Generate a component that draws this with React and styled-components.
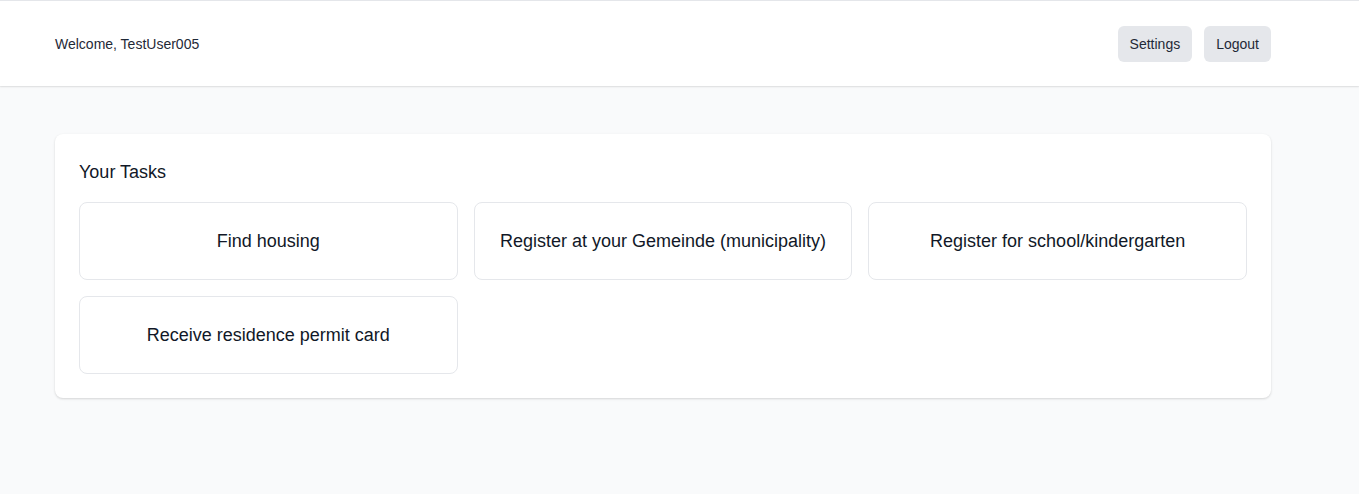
import React from "react"
import styled, { createGlobalStyle } from "styled-components"

const GlobalStyle = createGlobalStyle`
  * {
    box-sizing: border-box;
  }
  body {
    margin: 0;
    background: #f9fafb;
    font-family: "Liberation Sans", Arial, sans-serif;
    color: #111827;
  }
`

const Page = styled.div`
  min-height: 494px;
  background: #f9fafb;
  border-top: 1px solid #e5e7eb;
`

const Nav = styled.nav`
  background: #ffffff;
  box-shadow: 0 1px 2px rgba(0, 0, 0, 0.08), 0 1px 1px rgba(0, 0, 0, 0.04);
`

const Container = styled.div`
  width: 1280px;
  margin-left: 23px;
  padding: 0 32px;
`

const NavInner = styled(Container)`
  display: flex;
  align-items: center;
  justify-content: space-between;
  height: 85px;
`

const Welcome = styled.span`
  font-size: 14px;
  color: #1f2937;
`

const Actions = styled.div`
  display: flex;
  gap: 12px;
`

const Button = styled.button`
  height: 36px;
  padding: 0 12px;
  border: none;
  border-radius: 6px;
  background: #e5e7eb;
  color: #1f2937;
  font-family: inherit;
  font-size: 14px;
  cursor: pointer;
`

const Main = styled(Container)`
  padding-top: 48px;
`

const Card = styled.section`
  background: #ffffff;
  border-radius: 8px;
  padding: 24px;
  box-shadow: 0 1px 3px rgba(0, 0, 0, 0.1), 0 1px 2px rgba(0, 0, 0, 0.06);
`

const Title = styled.h2`
  margin: 0 0 16px;
  font-size: 18px;
  line-height: 28px;
  font-weight: normal;
  color: #111827;
`

const Grid = styled.div`
  display: grid;
  grid-template-columns: repeat(3, 1fr);
  gap: 16px;
`

const Task = styled.div`
  border: 1px solid #e5e7eb;
  border-radius: 8px;
  padding: 24px;
  text-align: center;
  font-size: 18px;
  line-height: 28px;
  color: #111827;
  cursor: pointer;
`

const tasks = [
  "Find housing",
  "Register at your Gemeinde (municipality)",
  "Register for school/kindergarten",
  "Receive residence permit card",
]

export default function App() {
  return (
    <>
      <GlobalStyle />
      <Page>
        <Nav>
          <NavInner>
            <Welcome>Welcome, TestUser005</Welcome>
            <Actions>
              <Button>Settings</Button>
              <Button>Logout</Button>
            </Actions>
          </NavInner>
        </Nav>
        <Main>
          <Card>
            <Title>Your Tasks</Title>
            <Grid>
              {tasks.map(task => (
                <Task key={task}>{task}</Task>
              ))}
            </Grid>
          </Card>
        </Main>
      </Page>
    </>
  )
}
